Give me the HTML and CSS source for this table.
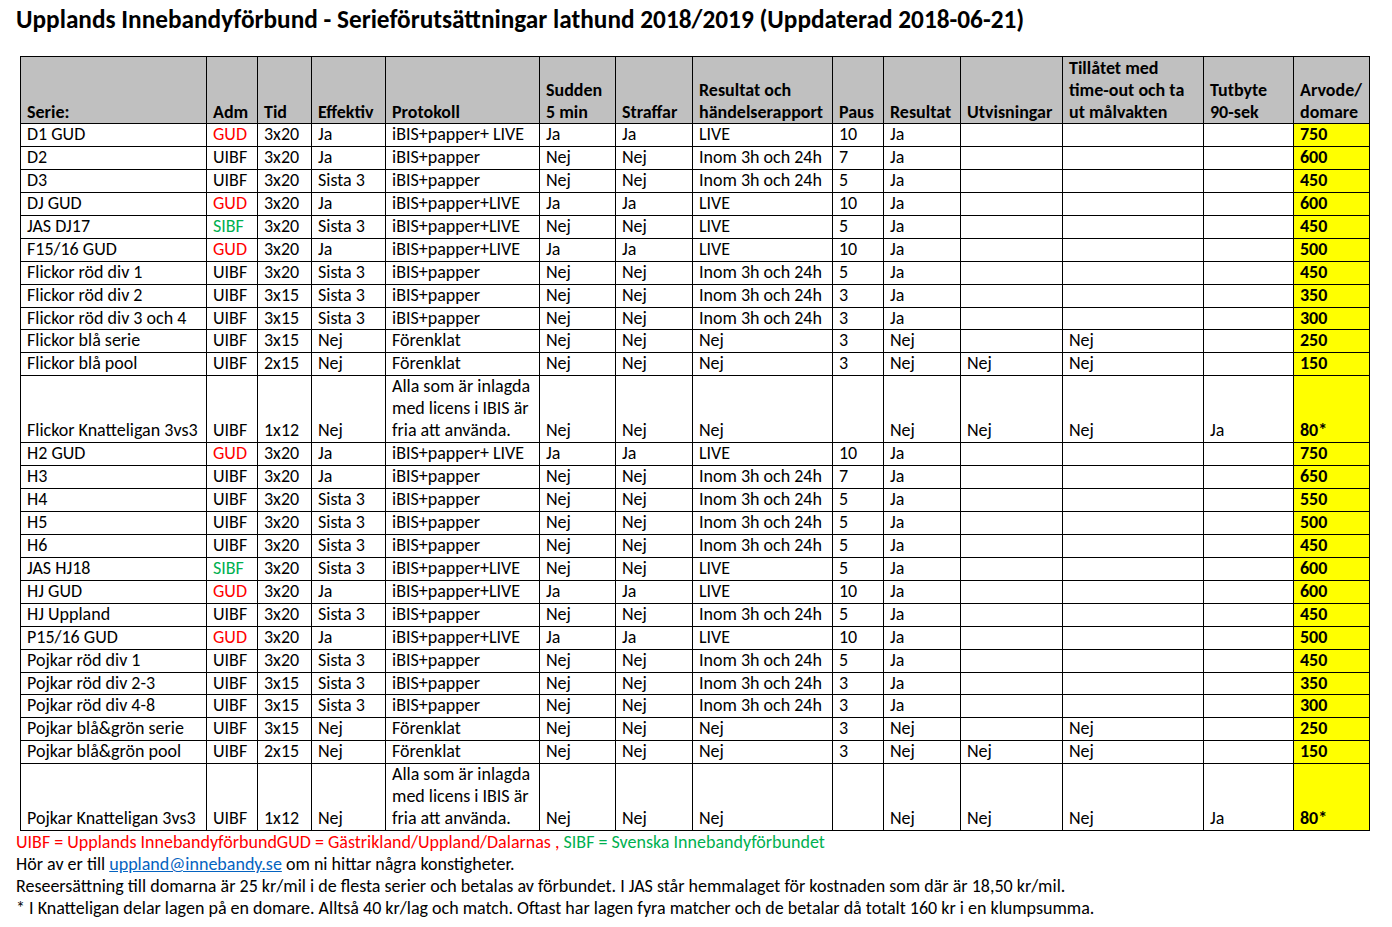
FILE: index.html
```html
<!DOCTYPE html>
<html lang="sv">
<head>
<meta charset="utf-8">
<title>Serieförutsättningar lathund 2018/2019</title>
<link rel="stylesheet" href="styles.css">
</head>
<body>
<div class="page">
  <h1 class="title">Upplands Innebandyförbund - Serieförutsättningar lathund 2018/2019 (Uppdaterad 2018-06-21)</h1>
  <table class="grid">
    <colgroup>
      <col class="w-serie"><col class="w-adm"><col class="w-tid"><col class="w-eff"><col class="w-prot">
      <col class="w-sud"><col class="w-str"><col class="w-res"><col class="w-paus"><col class="w-resu">
      <col class="w-utv"><col class="w-till"><col class="w-tut"><col class="w-arv">
    </colgroup>
    <thead>
      <tr>
        <th>Serie:</th><th>Adm</th><th>Tid</th><th>Effektiv</th><th>Protokoll</th>
        <th>Sudden<br>5 min</th><th>Straffar</th><th>Resultat och<br>händelserapport</th><th>Paus</th><th>Resultat</th>
        <th>Utvisningar</th><th>Tillåtet med<br>time-out och ta<br>ut målvakten</th><th>Tutbyte<br>90-sek</th><th>Arvode/<br>domare</th>
      </tr>
    </thead>
    <tbody>
      <tr><td>D1 GUD</td><td class="red">GUD</td><td>3x20</td><td>Ja</td><td>iBIS+papper+ LIVE</td><td>Ja</td><td>Ja</td><td>LIVE</td><td>10</td><td>Ja</td><td></td><td></td><td></td><td class="fee">750</td></tr>
      <tr><td>D2</td><td>UIBF</td><td>3x20</td><td>Ja</td><td>iBIS+papper</td><td>Nej</td><td>Nej</td><td>Inom 3h och 24h</td><td>7</td><td>Ja</td><td></td><td></td><td></td><td class="fee">600</td></tr>
      <tr><td>D3</td><td>UIBF</td><td>3x20</td><td>Sista 3</td><td>iBIS+papper</td><td>Nej</td><td>Nej</td><td>Inom 3h och 24h</td><td>5</td><td>Ja</td><td></td><td></td><td></td><td class="fee">450</td></tr>
      <tr><td>DJ GUD</td><td class="red">GUD</td><td>3x20</td><td>Ja</td><td>iBIS+papper+LIVE</td><td>Ja</td><td>Ja</td><td>LIVE</td><td>10</td><td>Ja</td><td></td><td></td><td></td><td class="fee">600</td></tr>
      <tr><td>JAS DJ17</td><td class="green">SIBF</td><td>3x20</td><td>Sista 3</td><td>iBIS+papper+LIVE</td><td>Nej</td><td>Nej</td><td>LIVE</td><td>5</td><td>Ja</td><td></td><td></td><td></td><td class="fee">450</td></tr>
      <tr><td>F15/16 GUD</td><td class="red">GUD</td><td>3x20</td><td>Ja</td><td>iBIS+papper+LIVE</td><td>Ja</td><td>Ja</td><td>LIVE</td><td>10</td><td>Ja</td><td></td><td></td><td></td><td class="fee">500</td></tr>
      <tr><td>Flickor röd div 1</td><td>UIBF</td><td>3x20</td><td>Sista 3</td><td>iBIS+papper</td><td>Nej</td><td>Nej</td><td>Inom 3h och 24h</td><td>5</td><td>Ja</td><td></td><td></td><td></td><td class="fee">450</td></tr>
      <tr><td>Flickor röd div 2</td><td>UIBF</td><td>3x15</td><td>Sista 3</td><td>iBIS+papper</td><td>Nej</td><td>Nej</td><td>Inom 3h och 24h</td><td>3</td><td>Ja</td><td></td><td></td><td></td><td class="fee">350</td></tr>
      <tr><td>Flickor röd div 3 och 4</td><td>UIBF</td><td>3x15</td><td>Sista 3</td><td>iBIS+papper</td><td>Nej</td><td>Nej</td><td>Inom 3h och 24h</td><td>3</td><td>Ja</td><td></td><td></td><td></td><td class="fee">300</td></tr>
      <tr><td>Flickor blå serie</td><td>UIBF</td><td>3x15</td><td>Nej</td><td>Förenklat</td><td>Nej</td><td>Nej</td><td>Nej</td><td>3</td><td>Nej</td><td></td><td>Nej</td><td></td><td class="fee">250</td></tr>
      <tr><td>Flickor blå pool</td><td>UIBF</td><td>2x15</td><td>Nej</td><td>Förenklat</td><td>Nej</td><td>Nej</td><td>Nej</td><td>3</td><td>Nej</td><td>Nej</td><td>Nej</td><td></td><td class="fee">150</td></tr>
      <tr><td>Flickor Knatteligan 3vs3</td><td>UIBF</td><td>1x12</td><td>Nej</td><td>Alla som är inlagda<br>med licens i IBIS är<br>fria att använda.</td><td>Nej</td><td>Nej</td><td>Nej</td><td></td><td>Nej</td><td>Nej</td><td>Nej</td><td>Ja</td><td class="fee">80*</td></tr>
      <tr><td>H2 GUD</td><td class="red">GUD</td><td>3x20</td><td>Ja</td><td>iBIS+papper+ LIVE</td><td>Ja</td><td>Ja</td><td>LIVE</td><td>10</td><td>Ja</td><td></td><td></td><td></td><td class="fee">750</td></tr>
      <tr><td>H3</td><td>UIBF</td><td>3x20</td><td>Ja</td><td>iBIS+papper</td><td>Nej</td><td>Nej</td><td>Inom 3h och 24h</td><td>7</td><td>Ja</td><td></td><td></td><td></td><td class="fee">650</td></tr>
      <tr><td>H4</td><td>UIBF</td><td>3x20</td><td>Sista 3</td><td>iBIS+papper</td><td>Nej</td><td>Nej</td><td>Inom 3h och 24h</td><td>5</td><td>Ja</td><td></td><td></td><td></td><td class="fee">550</td></tr>
      <tr><td>H5</td><td>UIBF</td><td>3x20</td><td>Sista 3</td><td>iBIS+papper</td><td>Nej</td><td>Nej</td><td>Inom 3h och 24h</td><td>5</td><td>Ja</td><td></td><td></td><td></td><td class="fee">500</td></tr>
      <tr><td>H6</td><td>UIBF</td><td>3x20</td><td>Sista 3</td><td>iBIS+papper</td><td>Nej</td><td>Nej</td><td>Inom 3h och 24h</td><td>5</td><td>Ja</td><td></td><td></td><td></td><td class="fee">450</td></tr>
      <tr><td>JAS HJ18</td><td class="green">SIBF</td><td>3x20</td><td>Sista 3</td><td>iBIS+papper+LIVE</td><td>Nej</td><td>Nej</td><td>LIVE</td><td>5</td><td>Ja</td><td></td><td></td><td></td><td class="fee">600</td></tr>
      <tr><td>HJ GUD</td><td class="red">GUD</td><td>3x20</td><td>Ja</td><td>iBIS+papper+LIVE</td><td>Ja</td><td>Ja</td><td>LIVE</td><td>10</td><td>Ja</td><td></td><td></td><td></td><td class="fee">600</td></tr>
      <tr><td>HJ Uppland</td><td>UIBF</td><td>3x20</td><td>Sista 3</td><td>iBIS+papper</td><td>Nej</td><td>Nej</td><td>Inom 3h och 24h</td><td>5</td><td>Ja</td><td></td><td></td><td></td><td class="fee">450</td></tr>
      <tr><td>P15/16 GUD</td><td class="red">GUD</td><td>3x20</td><td>Ja</td><td>iBIS+papper+LIVE</td><td>Ja</td><td>Ja</td><td>LIVE</td><td>10</td><td>Ja</td><td></td><td></td><td></td><td class="fee">500</td></tr>
      <tr><td>Pojkar röd div 1</td><td>UIBF</td><td>3x20</td><td>Sista 3</td><td>iBIS+papper</td><td>Nej</td><td>Nej</td><td>Inom 3h och 24h</td><td>5</td><td>Ja</td><td></td><td></td><td></td><td class="fee">450</td></tr>
      <tr><td>Pojkar röd div 2-3</td><td>UIBF</td><td>3x15</td><td>Sista 3</td><td>iBIS+papper</td><td>Nej</td><td>Nej</td><td>Inom 3h och 24h</td><td>3</td><td>Ja</td><td></td><td></td><td></td><td class="fee">350</td></tr>
      <tr><td>Pojkar röd div 4-8</td><td>UIBF</td><td>3x15</td><td>Sista 3</td><td>iBIS+papper</td><td>Nej</td><td>Nej</td><td>Inom 3h och 24h</td><td>3</td><td>Ja</td><td></td><td></td><td></td><td class="fee">300</td></tr>
      <tr><td>Pojkar blå&amp;grön serie</td><td>UIBF</td><td>3x15</td><td>Nej</td><td>Förenklat</td><td>Nej</td><td>Nej</td><td>Nej</td><td>3</td><td>Nej</td><td></td><td>Nej</td><td></td><td class="fee">250</td></tr>
      <tr><td>Pojkar blå&amp;grön pool</td><td>UIBF</td><td>2x15</td><td>Nej</td><td>Förenklat</td><td>Nej</td><td>Nej</td><td>Nej</td><td>3</td><td>Nej</td><td>Nej</td><td>Nej</td><td></td><td class="fee">150</td></tr>
      <tr><td>Pojkar Knatteligan 3vs3</td><td>UIBF</td><td>1x12</td><td>Nej</td><td>Alla som är inlagda<br>med licens i IBIS är<br>fria att använda.</td><td>Nej</td><td>Nej</td><td>Nej</td><td></td><td>Nej</td><td>Nej</td><td>Nej</td><td>Ja</td><td class="fee">80*</td></tr>
    </tbody>
  </table>
  <div class="notes">
    <p><span class="red">UIBF = Upplands InnebandyförbundGUD = Gästrikland/Uppland/Dalarnas , </span><span class="green">SIBF = Svenska Innebandyförbundet</span></p>
    <p>Hör av er till <a class="mail" href="mailto:uppland@innebandy.se">uppland@innebandy.se</a> om ni hittar några konstigheter.</p>
    <p>Reseersättning till domarna är 25 kr/mil i de flesta serier och betalas av förbundet. I JAS står hemmalaget för kostnaden som där är 18,50 kr/mil.</p>
    <p>* I Knatteligan delar lagen på en domare. Alltså 40 kr/lag och match. Oftast har lagen fyra matcher och de betalar då totalt 160 kr i en klumpsumma.</p>
  </div>
</div>
</body>
</html>
```

FILE: styles.css
```css
html, body {
  margin: 0;
  padding: 0;
  background: #ffffff;
}

body {
  font-family: Carlito, Calibri, Lato, "Liberation Sans", sans-serif;
  font-size: 18px;
  color: #000000;
}

.page {
  padding: 8px 0 0 16px;
}

.title {
  margin: 0;
  font-size: 25.3px;
  font-weight: bold;
  line-height: 24px;
  height: 24px;
  white-space: nowrap;
}

.grid {
  margin: 24px 0 0 4px;
  border-collapse: collapse;
  table-layout: fixed;
  width: 1349px;
}

.w-serie { width: 186px; }
.w-adm { width: 51px; }
.w-tid { width: 54px; }
.w-eff { width: 74px; }
.w-prot { width: 154px; }
.w-sud { width: 76px; }
.w-str { width: 77px; }
.w-res { width: 140px; }
.w-paus { width: 51px; }
.w-resu { width: 77px; }
.w-utv { width: 102px; }
.w-till { width: 141px; }
.w-tut { width: 90px; }
.w-arv { width: 76px; }

.grid th,
.grid td {
  border: 1px solid #000000;
  padding: 0 0 0 6px;
  line-height: 21.94px;
  height: 21.94px;
  text-align: left;
  vertical-align: bottom;
  white-space: nowrap;
  overflow: hidden;
}

.grid th {
  background: #c0c0c0;
  font-weight: bold;
  line-height: 22px;
}

.grid .fee {
  background: #ffff00;
  font-weight: bold;
}

.red { color: #ff0000; }
.green { color: #00b050; }

.notes p {
  margin: 0;
  line-height: 22px;
  white-space: nowrap;
}

.mail {
  color: #0563c1;
  text-decoration: underline;
}
```
